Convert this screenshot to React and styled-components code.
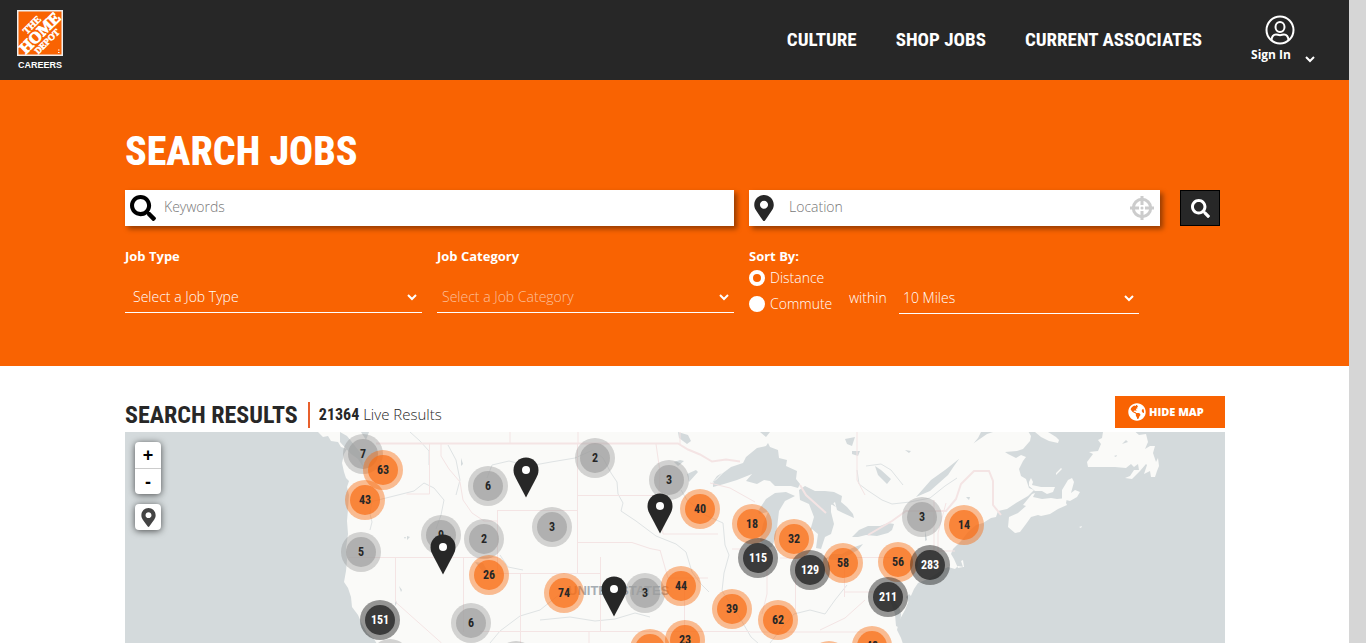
import { useState } from "react";
import styled, { createGlobalStyle } from "styled-components";
import { FaGlobeAmericas, FaMapMarkerAlt, FaSearch } from "react-icons/fa";

const navLinks = ["Culture", "Shop Jobs", "Current Associates"];

const clusters = [
  { x: 238, y: 22, count: 7, kind: "small" },
  { x: 258, y: 38, count: 63, kind: "medium" },
  { x: 240, y: 68, count: 43, kind: "medium" },
  { x: 236, y: 120, count: 5, kind: "small" },
  { x: 255, y: 188, count: 151, kind: "large" },
  { x: 265, y: 227, kind: "small" },
  { x: 316, y: 103, count: 9, kind: "small" },
  { x: 363, y: 54, count: 6, kind: "small" },
  { x: 359, y: 107, count: 2, kind: "small" },
  { x: 364, y: 143, count: 26, kind: "medium" },
  { x: 346, y: 191, count: 6, kind: "small" },
  { x: 391, y: 229, kind: "small" },
  { x: 470, y: 26, count: 2, kind: "small" },
  { x: 427, y: 95, count: 3, kind: "small" },
  { x: 439, y: 161, count: 74, kind: "medium" },
  { x: 544, y: 48, count: 3, kind: "small" },
  { x: 575, y: 77, count: 40, kind: "medium" },
  { x: 520, y: 161, count: 3, kind: "small" },
  { x: 556, y: 154, count: 44, kind: "medium" },
  { x: 525, y: 217, kind: "medium" },
  { x: 560, y: 208, count: 23, kind: "medium" },
  { x: 627, y: 92, count: 18, kind: "medium" },
  { x: 669, y: 107, count: 32, kind: "medium" },
  { x: 633, y: 126, count: 115, kind: "large" },
  { x: 718, y: 131, count: 58, kind: "medium" },
  { x: 685, y: 138, count: 129, kind: "large" },
  { x: 607, y: 177, count: 39, kind: "medium" },
  { x: 653, y: 188, count: 62, kind: "medium" },
  { x: 704, y: 229, kind: "medium" },
  { x: 747, y: 214, count: 48, kind: "medium" },
  { x: 773, y: 130, count: 56, kind: "medium" },
  { x: 805, y: 133, count: 283, kind: "large" },
  { x: 763, y: 165, count: 211, kind: "large" },
  { x: 797, y: 85, count: 3, kind: "small" },
  { x: 839, y: 93, count: 14, kind: "medium" },
];

const pins = [
  { x: 401, y: 65 },
  { x: 535, y: 101 },
  { x: 318, y: 142 },
  { x: 489, y: 184 },
];

const clusterColors = {
  small: { ring: "rgba(150, 150, 150, 0.4)", fill: "rgba(158, 158, 158, 0.65)", text: "#272727" },
  medium: { ring: "rgba(249, 99, 2, 0.42)", fill: "rgba(249, 110, 22, 0.7)", text: "#272727" },
  large: { ring: "rgba(39, 39, 39, 0.48)", fill: "rgba(39, 39, 39, 0.82)", text: "#ffffff" },
};

function Chevron() {
  return (
    <svg width="10" height="7" viewBox="0 0 10 7" fill="none" aria-hidden="true">
      <path d="M1 1l4 4 4-4" stroke="#fff" strokeWidth="2" />
    </svg>
  );
}

function Logo() {
  return (
    <svg width="46" height="46" viewBox="0 0 46 46" aria-label="The Home Depot">
      <rect width="46" height="46" fill="#eee" />
      <rect x="1.500" y="1.500" width="43" height="43" fill="#f96302" />
      <g
        transform="rotate(-45 23 23)"
        fill="#fff"
        stroke="#fff"
        fontFamily="'Liberation Serif', serif"
        fontWeight="700"
        textAnchor="middle"
      >
        <text x="23" y="15" fontSize="10" strokeWidth="0.4">THE</text>
        <text x="23" y="28" fontSize="16" strokeWidth="0.9">HOME</text>
        <text x="22" y="37" fontSize="9" strokeWidth="0.5">DEPOT</text>
      </g>
      <path d="M41 40h1.500M41 42.500h1.500" stroke="#fff" />
    </svg>
  );
}

function UserIcon() {
  return (
    <svg width="30" height="30" viewBox="0 0 30 30" fill="none" stroke="#fff" strokeWidth="2" aria-hidden="true">
      <circle cx="15" cy="15" r="13.5" />
      <ellipse cx="15" cy="12" rx="4.5" ry="5" />
      <path d="M6.5 25c.3-4 2-5.600 4.500-5.600 1.500 0 2.300.8 4 .8s2.500-.8 4-.8c2.500 0 4.200 1.600 4.500 5.600" />
    </svg>
  );
}

function CrosshairIcon() {
  return (
    <svg width="24" height="24" viewBox="0 0 24 24" fill="none" stroke="#ccc" strokeWidth="3" aria-hidden="true">
      <circle cx="12" cy="12" r="8.700" />
      <path d="M12 0v9M12 15v9M0 12h9M15 12h9" />
      <circle cx="12" cy="12" r="1.500" fill="#ccc" stroke="none" />
    </svg>
  );
}

function PinIcon() {
  return (
    <svg width="26" height="41" viewBox="0 0 26 41" aria-hidden="true">
      <path
        d="M13 0.500C6 .5.500 6 .500 13c0 3.500 1.200 6 2.500 8.500L13 40.500l10-19c1.300-2.500 2.500-5 2.500-8.500C25.500 6 20 .5 13 .5z"
        fill="#272727"
      />
      <circle cx="13" cy="13" r="4" fill="#fff" />
    </svg>
  );
}

function Geography() {
  return (
    <Land viewBox="125 432 1100 211" preserveAspectRatio="xMinYMin slice" aria-hidden="true">
      {/* mainland */}
      <path
        fill="#fafaf8"
        d="M318 432l5 5 5-1 3 5 7 1 3 5 6 2-3 5-2 9 2 9 2 6 3 3-2 6 2 8-1 14-1 12 1 13-2 14 1 12-1 11-2 11 4 6 3 9 1 10 6 8 4 9 5 9 7 6 3 5H903l-2-6-4-8 2-9 6-11 5-12 4-9 4-6 12-5 12-8 6-3 7 2 3-3 6 1-1-7-2 1 2 6-5 1-4-9-3-5 2-5 8-8 7-9 8-7 7-2 8-5 5-1 2-6 9-2 9-6 12-7 6-6-5-2-3-9-5-3-2-7 4-8 3-4-5-2-5 3-8-4-3-2 12-1 6-2 7-8 1-5-3-5-10-4-16 2-15 5-13 9-12 12-8 11-6 9-18 16-14 6 15-17 14-10 19-15 14-17 5-10 11-11 12-5 1-5z"
      />
      {/* gulf and atlantic islands */}
      <g fill="#fafaf8">
        <path d="M1035 432h13l8 5 3 3-1 3-9-2-8-4z" />
        <path d="M1031 478l2 4-1 3 9 2 8 0 6 0-2 5-6 2-5-3-7 0-6-5 0-4z" />
        <path d="M1062 490l6-10 4-2 2 4-3 11 4-3 5 2-3 5-7 4-8-2z" />
        <path d="M1023 505l9-11 3-1-2 4 9 2 9-1 6 1 10-1-1 5 1 2-9 4-8 5-9 2-3-1-7 2-5 7-6 8-5 1-7-6 1-10 9-4 8-7z" />
        <path d="M1103 432l-1 6-4 2 3 4-3 7-9 1 4 2-6 8 1 5 10 0 17 0 11 1 5-4 3 3 4-3 1 6-5 0-4 6-5 2 7 1 8-8 6-7 1 1-3 9 6-3 1 6 4 0 2-6 2-5-1-8-2 4-3-9 2-7-5 0-5 3 3-7-2-8-7 1-8-7z" />
        <path d="M1056 473l5-5 1 1-6 6zM1079 527l3-1-1 2z" />
      </g>
      <g fill="#d4dadc">
        <path d="M340 432l7 4 8 10 7 9 1 12-5-8-7-5-11-12zM361 432l8 0-3 8z" />
        {/* Superior */}
        <path d="M713 483l10-10 8-6 12-4 3-6 11-9 9-2 2-3 2 4 8 3 1 8 8 2-1 6 11 5-1 8 4 5-2 4-7-2-7 0-9 0-5-5-6-1-7 4-11-3 6-7-15 6-13 4-11 3z" />
        {/* Michigan */}
        <path d="M758 511l8-12 9-6 11-1 9 4-10 5-6 10-2 17-2 11-3 8-7 1-5-8 3-16 5-12-9 2z" />
        {/* Huron and Georgian Bay */}
        <path d="M799 490l6-4 10 5 10 0 9 1 8 4-1 6 6 5 6 7 1 4-11-5-6-3-2-8-4 3 0 7 3 12-3 10-6 3-4 12-5-1 2-14-6-5-2 2 4-14-5-13-9-4z" />
        {/* Erie and Ontario */}
        <path d="M825 559l7-5 10 0 10-6 11-4-5 6-9 5-13 5zM852 537l7-7 9-4 12 0 8-3 6 1-2 6-4 3-11 3-11-1-8 2z" />
        {/* Chesapeake and Delaware */}
        <path d="M887 596l5 9 3 9 1 12 4 2 1-14-2-8-3-2-5-10zM906 597l5 9 3-7-5-5z" />
        {/* inland lakes */}
        <path d="M678 432l10 3 3 6-4 3-8-6zM674 462l6-2 4 1-6 5zM687 474l9-4 2 2-9 10zM713 482l12-7-5 7zM712 483l5-7 5-3zM824 500l7 0 5 7zM760 432h10l-4 5zM845 439l10-2-3 9-5-2zM852 451l8 0-2 5-6-2zM875 466l6 4 10 9-4 5-9-9zM905 450l6 1-2 2zM475 562l8 1 6 11-6-2zM925 530l2 10-2 1z" />
        <path d="M461 458l2 6-2 2zM407 536l3 1-3 3zM404 537l2 0-1 2zM395 598l2 5-2 3zM399 586l3 4-1 2z" />
        <path d="M1122 444l4-4 2 2zM1114 456l3-1-1 2zM966 497l4 0-1 3z" />
      </g>
      {/* rivers */}
      <g fill="none" stroke="#dfe3e4" strokeWidth="1">
        <path d="M362 502l12-1 20-5 20-5 10-8 10 5 10 12-3 15-5 14M372 500l-2 14 2 8-2 8M487 478l5-13 17-4 20 5 22-4 24-4 18-8 10 8 8 15 6 9 1 12 5 9-2 8 15 10 20 15 20 8 10 8 6 20 9 12 8 8M500 555l8 12 15 3M490 643l10-12 20-15 20-6 20-16 12-5M540 620l30-3 25 4 20-2 20-6 15 4M681 490l6 10 18 15 18 8 2 22 4 10-5 18-2 18 15 22 14 24 15 13M770 643l12-15 12-14 16-4 15 4 10-14 12-15M857 470l2 14 8 6 15 10 10 4 18-2 20-4 15-12 12-8M866 466l15-2 10 6 12 15M410 432l10 9 9 10 0 14M448 445l8 15 4 20-4 15" />
      </g>
      {/* country and state borders */}
      <g fill="none" stroke="#f4e4e4" strokeWidth="1">
        <path strokeWidth="2" d="M376 443.500H678l10 6 12 5 12 7 14-2 14 2M800 485l6 10 20 18M868 535l24-14 14-10h40l10-12 5-15 13-13 15 0 4 10v24l8 10" />
        <path d="M510 432v12M578 432v12M680 432v12M429.500 444v50h-23M441 444v12l8 13 11 13 3 18 9 13 12 8h13M497.500 510.500h80M497.500 510v63M577.500 444v129M349 557.500h148M577 495.500h80M577 542.500h55l18 6 10 2M656 444l4 28-1 20 4 42h55M395.500 557v45l46 41M463.500 557v75M497 573.500h103M520.500 573v70M600.500 557v75M480 631.500h270M589 643v-12M660 550l8 28h40M684.500 580v63M732 549h28M767 556v38l-5 20M795.500 560v50M780 558h30M844.500 555v42M844 592h45M857 557.500h40M710 483l20 5 25 14M857 432v48l8 15M820 630l25-12 20-18M750 632h120M934 500v50M925 551h30M946 503l-8 30v22" />
      </g>
      <text x="568" y="595" fontSize="13" fontWeight="700" fill="#a6adb3" fontFamily="'Liberation Sans', sans-serif">
        UNITED STATES
      </text>
    </Land>
  );
}

export default function App() {
  const [sortBy, setSortBy] = useState("distance");
  const [showMap, setShowMap] = useState(true);

  return (
    <>
      <GlobalStyle />
      <Shell>
        <Page>
          <Header>
            <Brand href="#">
              <Logo />
              <BrandName>CAREERS</BrandName>
            </Brand>
            <Nav>
              {navLinks.map((link) => (
                <NavLink key={link} href="#">{link}</NavLink>
              ))}
            </Nav>
            <SignIn type="button">
              <SignInLabel>
                <UserIcon />
                Sign In
              </SignInLabel>
              <Chevron />
            </SignIn>
          </Header>

          <SearchPanel onSubmit={(e) => e.preventDefault()}>
            <Title>SEARCH JOBS</Title>
            <SearchGrid>
              <SearchBox>
                <FaSearch size={26} color="#000" aria-hidden="true" />
                <SearchInput type="text" name="keywords" placeholder="Keywords" aria-label="Keywords" />
              </SearchBox>
              <LocationRow>
                <SearchBox $wide>
                  <FaMapMarkerAlt size={26} color="#272727" aria-hidden="true" />
                  <SearchInput type="text" name="location" placeholder="Location" aria-label="Location" />
                  <LocateButton type="button" aria-label="Use my location">
                    <CrosshairIcon />
                  </LocateButton>
                </SearchBox>
                <SearchButton type="submit" aria-label="Search">
                  <FaSearch size={19} />
                </SearchButton>
              </LocationRow>

              <FilterRow>
                <Filter>
                  <FilterLabel htmlFor="jobType">Job Type</FilterLabel>
                  <SelectBox>
                    <Select id="jobType">
                      <option>Select a Job Type</option>
                    </Select>
                    <Chevron />
                  </SelectBox>
                </Filter>
                <Filter>
                  <FilterLabel htmlFor="jobCategory">Job Category</FilterLabel>
                  <SelectBox>
                    <Select id="jobCategory" $faded>
                      <option>Select a Job Category</option>
                    </Select>
                    <Chevron />
                  </SelectBox>
                </Filter>
              </FilterRow>
              <SortGroup>
                <SortLegend>Sort By:</SortLegend>
                <SortRow>
                  <RadioList>
                    <RadioLabel>
                      <Radio
                        type="radio"
                        name="sort"
                        checked={sortBy === "distance"}
                        onChange={() => setSortBy("distance")}
                      />
                      Distance
                    </RadioLabel>
                    <RadioLabel>
                      <Radio
                        type="radio"
                        name="sort"
                        checked={sortBy === "commute"}
                        onChange={() => setSortBy("commute")}
                      />
                      Commute
                    </RadioLabel>
                  </RadioList>
                  <WithinLabel htmlFor="radius">within</WithinLabel>
                  <SelectBox $radius>
                    <Select id="radius" $tight>
                      <option>10 Miles</option>
                    </Select>
                    <Chevron />
                  </SelectBox>
                </SortRow>
              </SortGroup>
            </SearchGrid>
          </SearchPanel>

          <Results>
            <ResultsBar>
              <ResultsTitle>SEARCH RESULTS</ResultsTitle>
              <ResultsCount>
                <strong>21364</strong> Live Results
              </ResultsCount>
              <MapToggle type="button" onClick={() => setShowMap(!showMap)}>
                <FaGlobeAmericas size={18} />
                HIDE MAP
              </MapToggle>
            </ResultsBar>
            {showMap && (
              <MapView>
                <Geography />
                {clusters.map((c) => (
                  <Cluster key={`${c.x}-${c.y}`} type="button" $x={c.x} $y={c.y} $colors={clusterColors[c.kind]}>
                    <span>{c.count}</span>
                  </Cluster>
                ))}
                {pins.map((p) => (
                  <Pin key={`${p.x}-${p.y}`} type="button" aria-label="Job location" $x={p.x} $y={p.y}>
                    <PinIcon />
                  </Pin>
                ))}
                <MapControls>
                  <ControlGroup>
                    <ControlButton type="button">+</ControlButton>
                    <ControlButton type="button">-</ControlButton>
                  </ControlGroup>
                  <ControlGroup>
                    <ControlButton type="button" aria-label="Locate">
                      <FaMapMarkerAlt size={19} color="#444" />
                    </ControlButton>
                  </ControlGroup>
                </MapControls>
              </MapView>
            )}
          </Results>
        </Page>
        <ScrollTrack />
      </Shell>
    </>
  );
}

const condensed = `"Liberation Sans Narrow", "Roboto Condensed", "Liberation Sans", sans-serif`;

const GlobalStyle = createGlobalStyle`
  * {
    box-sizing: border-box;
  }
  body {
    margin: 0;
    background: #fff;
    color: #272727;
    font: 300 14px/20px "Open Sans", sans-serif;
  }
  button, input, select {
    font: inherit;
  }
  button {
    padding: 0;
    border: 0;
    cursor: pointer;
  }
`;

const Shell = styled.div`
  display: flex;
  height: 100vh;
  overflow: hidden;
`;

const Page = styled.div`
  flex: 1;
  min-width: 0;
  display: flex;
  flex-direction: column;
`;

const ScrollTrack = styled.div`
  width: 17px;
  background: #d6d6d6;
`;

const Header = styled.header`
  display: flex;
  align-items: center;
  flex-shrink: 0;
  height: 80px;
  padding: 0 34px 0 17px;
  background: #272727;
`;

const Brand = styled.a`
  display: flex;
  flex-direction: column;
  align-items: center;
  gap: 4px;
  color: #fff;
  text-decoration: none;
`;

const BrandName = styled.span`
  font: 700 9px/10px "Liberation Sans", sans-serif;
`;

const Nav = styled.nav`
  display: flex;
  gap: 39px;
  margin-left: auto;
  margin-right: 45px;
`;

const NavLink = styled.a`
  color: #fff;
  font: 700 19px/26px ${condensed};
  text-transform: uppercase;
  text-decoration: none;
`;

const SignIn = styled.button`
  display: flex;
  align-items: flex-end;
  gap: 10px;
  background: none;
  color: #fff;

  > svg {
    margin-bottom: 2px;
  }
`;

const SignInLabel = styled.span`
  display: flex;
  flex-direction: column;
  align-items: center;
  font-size: 12px;
  font-weight: 700;
  line-height: 20px;

  svg {
    margin-left: 18px;
  }
`;

const SearchPanel = styled.form`
  flex-shrink: 0;
  min-height: 286px;
  padding: 48px 124px 40px 125px;
  background: #f96302;
  color: #fff;
`;

const Title = styled.h1`
  margin: 0 0 14px;
  font: 800 40px/48px ${condensed};
`;

const SearchGrid = styled.div`
  display: grid;
  grid-template-columns: minmax(0, 609fr) minmax(0, 476fr);
  gap: 20px 15px;
`;

const SearchBox = styled.div`
  display: flex;
  align-items: center;
  flex: 1;
  gap: ${(props) => (props.$wide ? "6px" : "2px")};
  height: 36px;
  padding: 0 6px 0 ${(props) => (props.$wide ? "2px" : "5px")};
  background: #fff;
  box-shadow: 3px 3px 5px rgba(0, 0, 0, 0.4);
`;

const SearchInput = styled.input`
  flex: 1;
  min-width: 0;
  height: 32px;
  padding: 0 6px 4px;
  border: 0;
  outline: 0;
  background: none;

  &::placeholder {
    color: #777;
  }
`;

const LocationRow = styled.div`
  display: flex;
  gap: 20px;
  padding-right: 5px;
`;

const LocateButton = styled.button`
  display: flex;
  background: none;
`;

const SearchButton = styled.button`
  display: grid;
  place-items: center;
  width: 40px;
  height: 36px;
  border: 1px solid #000;
  background: #272727;
  color: #fff;
`;

const FilterRow = styled.div`
  display: grid;
  grid-template-columns: 1fr 1fr;
  gap: 15px;
  align-items: start;
`;

const Filter = styled.div`
  display: flex;
  flex-direction: column;
  gap: 16px;
`;

const FilterLabel = styled.label`
  font-size: 13px;
  font-weight: 700;
`;

const SelectBox = styled.div`
  position: relative;
  width: ${(props) => (props.$radius ? "240px" : "100%")};

  > svg {
    position: absolute;
    right: 5px;
    top: 12px;
    pointer-events: none;
  }
`;

const Select = styled.select`
  width: 100%;
  height: 31px;
  padding: 0 24px 0 ${(props) => (props.$tight ? "4px" : props.$faded ? "5px" : "8px")};
  border: 0;
  border-bottom: 1px solid #fff;
  border-radius: 0;
  appearance: none;
  background: none;
  color: ${(props) => (props.$faded ? "rgba(255, 255, 255, 0.6)" : "#fff")};
`;

const SortGroup = styled.fieldset`
  min-width: 0;
  margin: 0;
  padding: 0;
  border: 0;
`;

const SortLegend = styled.legend`
  padding: 0;
  font-size: 13px;
  font-weight: 700;
`;

const SortRow = styled.div`
  display: flex;
  align-items: flex-end;
`;

const RadioList = styled.div`
  display: flex;
  flex-direction: column;
  gap: 6px;
  width: 100px;
  padding-top: 2px;
`;

const RadioLabel = styled.label`
  display: flex;
  align-items: center;
  gap: 5px;
`;

const Radio = styled.input`
  width: 16px;
  height: 16px;
  margin: 0;
  border: 4px solid #fff;
  border-radius: 50%;
  appearance: none;
  background: ${(props) => (props.checked ? "#f96302" : "#fff")};
`;

const WithinLabel = styled.label`
  width: 50px;
  padding-bottom: 6px;
`;

const Results = styled.main`
  flex: 1;
  min-height: 0;
  display: flex;
  flex-direction: column;
  padding: 30px 124px 0 125px;
`;

const ResultsBar = styled.div`
  display: flex;
  align-items: flex-end;
  margin-bottom: 4px;
`;

const ResultsTitle = styled.h2`
  margin: 0;
  padding-right: 10px;
  border-right: 2px solid #e8602c;
  font: 700 24px/26px ${condensed};
`;

const ResultsCount = styled.p`
  margin: 0 auto 0 9px;
  font-size: 15px;
  line-height: 28px;

  strong {
    font: 700 16px/20px ${condensed};
  }
`;

const MapToggle = styled.button`
  display: flex;
  align-items: center;
  gap: 3px;
  width: 110px;
  height: 32px;
  padding-left: 13px;
  background: #f96302;
  color: #fff;
  font-size: 11px;
  font-weight: 800;
`;

const MapView = styled.div`
  position: relative;
  flex: 1;
  overflow: hidden;
  background: #d4dadc;
`;

const Land = styled.svg`
  display: block;
  width: 100%;
  height: 100%;
`;

const Cluster = styled.button`
  position: absolute;
  left: ${(props) => props.$x}px;
  top: ${(props) => props.$y}px;
  width: 40px;
  height: 40px;
  margin: -20px 0 0 -20px;
  padding: 5px;
  border-radius: 50%;
  background: ${(props) => props.$colors.ring};
  color: ${(props) => props.$colors.text};

  span {
    display: block;
    height: 30px;
    border-radius: 50%;
    background: ${(props) => props.$colors.fill};
    font: 700 12px/30px ${condensed};
  }
`;

const Pin = styled.button`
  position: absolute;
  left: ${(props) => props.$x}px;
  top: ${(props) => props.$y}px;
  display: flex;
  margin: -40px 0 0 -13px;
  background: none;
`;

const MapControls = styled.div`
  position: absolute;
  left: 10px;
  top: 10px;
  display: flex;
  flex-direction: column;
  gap: 10px;
`;

const ControlGroup = styled.div`
  width: 26px;
  border-radius: 4px;
  background: #fff;
  box-shadow: 0 1px 7px rgba(0, 0, 0, 0.65);
`;

const ControlButton = styled.button`
  display: grid;
  place-items: center;
  width: 26px;
  height: 26px;
  background: none;
  color: #000;
  font: 700 18px/24px "Liberation Sans", sans-serif;

  & + & {
    border-top: 1px solid #ccc;
  }
`;
